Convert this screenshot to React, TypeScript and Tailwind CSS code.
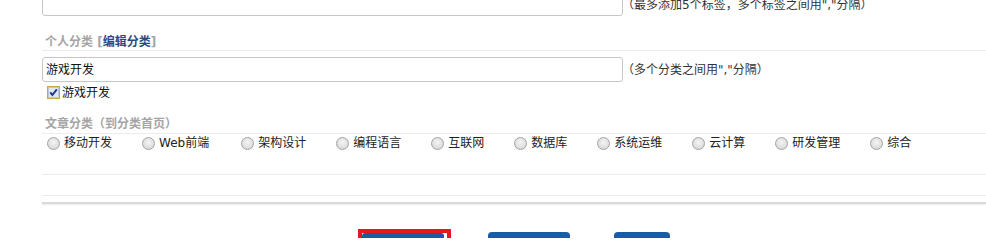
import React from "react";

const cats = ["移动开发", "Web前端", "架构设计", "编程语言", "互联网", "数据库", "系统运维", "云计算", "研发管理", "综合"];

function Radio() {
  return (
    <span className="inline-block w-[13px] h-[13px] rounded-full border border-[#a3a3a3] bg-[radial-gradient(circle_at_50%_40%,#f4f4f4_0%,#dcdcdc_70%,#c8c8c8_100%)] shrink-0" />
  );
}

function Checkbox() {
  return (
    <svg width="13" height="13" viewBox="0 0 13 13" className="shrink-0">
      <rect x="0.5" y="0.5" width="12" height="12" fill="#fff" stroke="#c9a64f" />
      <rect x="1.5" y="1.5" width="10" height="10" fill="#dfe9f5" stroke="#b7c9e2" />
      <path d="M3.2 6.4 L5.4 9 L9.8 3.4" fill="none" stroke="#1b3a8a" strokeWidth="2" />
    </svg>
  );
}

export default function App() {
  return (
    <div
      className="w-[986px] h-[238px] overflow-hidden bg-white text-[12px] text-[#222]"
      style={{ fontFamily: '"DejaVu Sans", "Noto Sans CJK SC", sans-serif' }}
    >
      <div className="pl-[42px]">
        {/* tag input row */}
        <div className="flex items-center mt-[-9px]">
          <div className="w-[581px] h-[25px] border border-[#c6c6c6] rounded-[3px] bg-white shrink-0" />
          <span className="ml-[-1px] mt-[2px] whitespace-nowrap text-[#333]">（最多添加5个标签，多个标签之间用","分隔）</span>
        </div>

        {/* personal category header */}
        <div className="mt-[18px] h-[17px] leading-[16px] border-b border-[#ececec] pl-[3px] font-bold text-[#a5a5a5] whitespace-nowrap">
          个人分类 [<span className="text-[#2a4a84]">编辑分类</span>]
        </div>

        <div className="flex items-center mt-[6px]">
          <div className="w-[581px] h-[25px] border border-[#c6c6c6] rounded-[3px] bg-white shrink-0 flex items-center pl-[3px] text-[#111]">
            游戏开发
          </div>
          <span className="ml-[-1px] whitespace-nowrap text-[#333]">（多个分类之间用","分隔）</span>
        </div>

        <div className="flex items-center mt-[3px] h-[15px] pl-[5px]">
          <Checkbox />
          <span className="ml-[2px] leading-[15px] mt-[2px] text-[#111]">游戏开发</span>
        </div>

        {/* article category header */}
        <div className="mt-[16px] h-[18px] leading-[17px] border-b border-[#ececec] pl-[3px] font-bold text-[#a5a5a5] whitespace-nowrap">
          文章分类（到分类首页）
        </div>

        <div className="h-[41px] border-b border-[#ececec]">
          <div className="flex items-center h-[18px] pl-[5px]">
            {cats.map((c) => (
              <label key={c} className="flex items-center mr-[30px] whitespace-nowrap">
                <Radio />
                <span className={c === "Web前端" ? "ml-[4px] mr-[2px] text-[#222]" : "ml-[4px] text-[#222]"}>{c}</span>
              </label>
            ))}
          </div>
        </div>

        <div className="h-[21px] border-b border-[#ececec]" />
        <div className="h-[8px] border-b-2 border-[#d9d9d9] shadow-[0_1px_2px_rgba(0,0,0,0.08)]" />

        {/* buttons */}
        <div className="flex items-start mt-[25px] pl-[316px]">
          <div className="border-[4px] border-[#df1a22] pr-[3px] bg-white">
            <div className="w-[82px] h-[30px] bg-[#1c5b9f] rounded-t-[3px]" />
          </div>
          <div className="ml-[37px] mt-[3px] w-[82px] h-[30px] bg-[#1c5b9f] rounded-t-[4px]" />
          <div className="ml-[44px] mt-[3px] w-[56px] h-[30px] bg-[#1c5b9f] rounded-t-[4px]" />
        </div>
      </div>
    </div>
  );
}
